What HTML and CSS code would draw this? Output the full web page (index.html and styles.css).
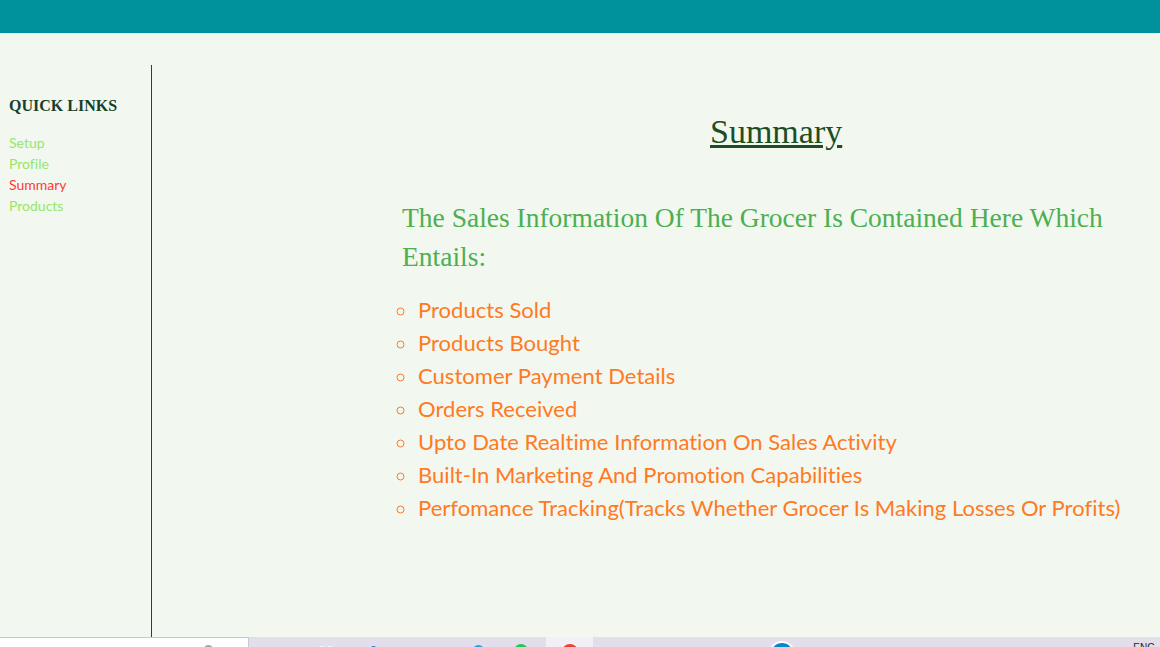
FILE: index.html
```html
<!DOCTYPE html>
<html lang="en">
<head>
    <meta charset="UTF-8">
    <meta name="viewport" content="width=device-width, initial-scale=1.0">
    <title>Summary</title>
    <link rel="stylesheet" href="styles.css">
</head>
<body>
    <div class="topbar"></div>
    <div class="page">
        <aside class="sidebar">
            <h3>QUICK LINKS</h3>
            <ul class="links">
                <li><a href="#">Setup</a></li>
                <li><a href="#">Profile</a></li>
                <li><a href="#" class="active">Summary</a></li>
                <li><a href="#">Products</a></li>
            </ul>
        </aside>
        <main class="content">
            <h1>Summary</h1>
            <h2>The Sales Information Of The Grocer Is Contained Here Which Entails:</h2>
            <ul class="features">
                <li>Products Sold</li>
                <li>Products Bought</li>
                <li>Customer Payment Details</li>
                <li>Orders Received</li>
                <li>Upto Date Realtime Information On Sales Activity</li>
                <li>Built-In Marketing And Promotion Capabilities</li>
                <li>Perfomance Tracking(Tracks Whether Grocer Is Making Losses Or Profits)</li>
            </ul>
        </main>
    </div>
    <div class="taskbar">
        <div class="search"></div>
        <div class="tray">
            <span class="lang">ENG</span>
        </div>
        <!-- tops of the taskbar icons, the rest is below the window edge -->
        <svg class="tray-icons" width="1160" height="10" viewBox="0 0 1160 10">
            <rect x="546" y="0" width="47" height="10" fill="#f2eff6"/>
            <circle cx="208.500" cy="13" r="5" fill="#a9a4ad"/>
            <circle cx="322" cy="13" r="4" fill="#f7f6fa"/>
            <circle cx="330" cy="13" r="4" fill="#f7f6fa"/>
            <circle cx="373.500" cy="12" r="3" fill="#2b7fd6"/>
            <circle cx="478.500" cy="14" r="6" fill="#2a9fe0"/>
            <circle cx="521" cy="14" r="7" fill="#22c55e"/>
            <circle cx="570" cy="15" r="8" fill="#ea4335"/>
            <circle cx="782" cy="17" r="13" fill="#ffffff"/>
            <circle cx="782" cy="17" r="11" fill="#0a86c8"/>
        </svg>
    </div>
</body>
</html>
```
FILE: styles.css
```css
body {
    margin: 0;
    display: flex;
    flex-direction: column;
    height: 647px;
    overflow: hidden;
    background-color: #f2f7f0;
    font-family: Lato, sans-serif;
    font-variant-ligatures: none;
}

.topbar {
    height: 33px;
    background-color: #00929c;
}

.page {
    flex: 1;
    display: flex;
    padding-top: 32px;
}

.sidebar {
    width: 142px;
    padding-left: 9px;
    border-right: 1px solid #1d4d25;
}

.sidebar h3 {
    margin: 31px 0 0;
    font-family: "Liberation Serif", serif;
    font-size: 16px;
    line-height: 20px;
    font-weight: bold;
    color: #17402a;
}

.links {
    list-style: none;
    margin: 16px 0 0;
    padding: 0;
}

.links li {
    height: 21px;
    font-size: 14px;
    line-height: 21px;
}

.links a {
    color: #95e66a;
    text-decoration: none;
}

.links a.active {
    color: #ff3b30;
}

.content {
    flex: 1;
    padding-left: 250px;
}

.content h1 {
    margin: 47px 0 0;
    padding-left: 308px;
    font-family: "Liberation Serif", serif;
    font-size: 34px;
    line-height: 40px;
    font-weight: normal;
    color: #1d4d25;
    text-decoration: underline;
}

.content h2 {
    margin: 46px 0 0;
    font-family: "Liberation Serif", serif;
    font-size: 27.5px;
    line-height: 39px;
    font-weight: normal;
    color: #4caf50;
}

.features {
    list-style: circle;
    margin: 17px 0 0;
    padding-left: 16px;
    white-space: nowrap;
    font-size: 22px;
    line-height: 33px;
    letter-spacing: 0.03px;
    color: #ff7a22;
}

.taskbar {
    position: relative;
    display: flex;
    height: 10px;
    background-color: #e2deec;
}

.search {
    width: 249px;
    background-color: #ffffff;
    border-top: 1px solid #c9c9c9;
    border-right: 1px solid #c9c9c9;
    box-sizing: border-box;
}

.tray {
    flex: 1;
    display: flex;
    justify-content: flex-end;
}

.tray-icons {
    position: absolute;
    left: 0;
    top: 0;
}

.lang {
    position: relative;
    z-index: 1;
    font-family: "Liberation Sans", sans-serif;
    font-size: 10px;
    line-height: 22px;
    color: #222222;
    padding-right: 5px;
}
```
